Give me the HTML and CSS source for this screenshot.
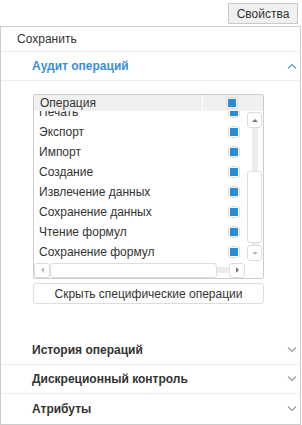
FILE: index.html
```html
<!DOCTYPE html>
<html lang="ru">
<head>
  <meta charset="UTF-8" />
  <title>Свойства</title>
  <link rel="stylesheet" href="styles.css">
</head>
<body>
  <div class="toolbar">
    <button class="tool-btn">Свойства</button>
  </div>
  <div class="panel">
    <div class="item">Сохранить</div>

    <div class="sect-head open">
      <span>Аудит операций</span>
      <svg class="chev" width="10" height="6" viewBox="0 0 10 6"><path d="M1 5.5L5 1.5L9 5.5" fill="none" stroke="#4b9be0" stroke-width="1.2"/></svg>
    </div>
    <div class="sect-body">
      <div class="grid">
        <div class="grid-head">
          <div class="col-name">Операция</div>
          <div class="col-check"><span class="check"></span></div>
        </div>
        <div class="grid-body">
          <div class="rows">
            <div class="row-list">
              <div class="row"><span>Печать</span><span class="check"></span></div>
              <div class="row"><span>Экспорт</span><span class="check"></span></div>
              <div class="row"><span>Импорт</span><span class="check"></span></div>
              <div class="row"><span>Создание</span><span class="check"></span></div>
              <div class="row"><span>Извлечение данных</span><span class="check"></span></div>
              <div class="row"><span>Сохранение данных</span><span class="check"></span></div>
              <div class="row"><span>Чтение формул</span><span class="check"></span></div>
              <div class="row"><span>Сохранение формул</span><span class="check"></span></div>
            </div>
          </div>
          <div class="vscroll">
            <div class="sb-btn"><span class="arr up"></span></div>
            <div class="v-track"></div>
            <div class="v-thumb"></div>
            <div class="v-track short"></div>
            <div class="sb-btn"><span class="arr down"></span></div>
          </div>
        </div>
        <div class="hscroll">
          <div class="sb-btn h"><span class="arr left"></span></div>
          <div class="h-thumb"></div>
          <div class="h-track"></div>
          <div class="sb-btn h"><span class="arr right"></span></div>
        </div>
      </div>
      <button class="wide-btn">Скрыть специфические операции</button>
    </div>

    <div class="sect-head">
      <span>История операций</span>
      <svg class="chev" width="10" height="6" viewBox="0 0 10 6"><path d="M1 0.5L5 4.5L9 0.5" fill="none" stroke="#999" stroke-width="1.1"/></svg>
    </div>
    <div class="sect-head">
      <span>Дискреционный контроль</span>
      <svg class="chev" width="10" height="6" viewBox="0 0 10 6"><path d="M1 0.5L5 4.5L9 0.5" fill="none" stroke="#999" stroke-width="1.1"/></svg>
    </div>
    <div class="sect-head last">
      <span>Атрибуты</span>
      <svg class="chev" width="10" height="6" viewBox="0 0 10 6"><path d="M1 0.5L5 4.5L9 0.5" fill="none" stroke="#999" stroke-width="1.1"/></svg>
    </div>
  </div>
</body>
</html>
```

FILE: styles.css
```css
* {
  box-sizing: border-box;
  margin: 0;
  padding: 0;
}
body {
  font-family: 'Liberation Sans', Arial, sans-serif;
  font-size: 12px;
  color: #333;
  background: #fff;
  width: 302px;
  height: 425px;
  overflow: hidden;
}
.toolbar {
  height: 26px;
  display: flex;
  justify-content: flex-end;
  align-items: flex-start;
  padding: 3px 4px 0 0;
}
.tool-btn {
  width: 70px;
  height: 21px;
  background: #f0f0f0;
  border: 1px solid #c9c9c9;
  font: inherit;
  color: #333;
}
.panel {
  width: 301px;
  height: 399px;
  border: 1px solid #ccc;
  display: flex;
  flex-direction: column;
}
.item {
  height: 25px;
  line-height: 24px;
  padding-left: 16px;
  border-bottom: 1px solid #eee;
}
.sect-head {
  height: 29px;
  flex-shrink: 0;
  display: flex;
  align-items: center;
  justify-content: space-between;
  padding: 0 3px 0 31px;
  border-bottom: 1px solid #eee;
  font-weight: bold;
}
.sect-head.open {
  color: #3a8fd8;
}
.sect-head.last {
  flex: 1;
  border-bottom: none;
}
.chev {
  display: block;
}
.sect-body {
  padding: 13px 36px 32px 32px;
  display: flex;
  flex-direction: column;
  gap: 4px;
}
.grid {
  height: 185px;
  border: 1px solid #ccc;
  border-radius: 2px;
  display: flex;
  flex-direction: column;
}
.grid-head {
  height: 16px;
  background: #f0f0f0;
  display: flex;
  align-items: center;
}
.col-name {
  width: 169px;
  height: 100%;
  line-height: 16px;
  padding-left: 6px;
  border-right: 1px solid #fff;
}
.col-check {
  flex: 1;
  display: flex;
  padding-left: 23px;
}
.grid-body {
  height: 151px;
  display: flex;
}
.rows {
  flex: 1;
  overflow: hidden;
}
.row-list {
  margin-top: -9px;
}
.row {
  height: 20px;
  display: flex;
  align-items: center;
  justify-content: space-between;
  padding: 0 6px 0 5px;
}
.check {
  width: 12px;
  height: 12px;
  border: 1px solid #dcdcdc;
  border-radius: 3px;
  padding: 1px;
  background: #fff;
  display: block;
}
.check::after {
  content: "";
  display: block;
  width: 8px;
  height: 8px;
  background: #2b8cd6;
}
.vscroll {
  width: 17px;
  padding: 1px 1px 1px 1px;
  display: flex;
  flex-direction: column;
  align-items: center;
}
.sb-btn {
  width: 15px;
  height: 16px;
  border: 1px solid #ddd;
  border-radius: 3px;
  background: #fff;
  display: flex;
  align-items: center;
  justify-content: center;
  flex-shrink: 0;
}
.v-track {
  flex: 1;
  width: 6px;
  background: #ececec;
}
.v-track.short {
  flex: 0 0 2px;
}
.v-thumb {
  width: 15px;
  height: 72px;
  border: 1px solid #ddd;
  border-radius: 3px;
  background: #fff;
}
.hscroll {
  height: 16px;
  display: flex;
  align-items: center;
}
.sb-btn.h {
  width: 16px;
  height: 15px;
}
.h-thumb {
  width: 167px;
  height: 15px;
  border: 1px solid #ddd;
  border-radius: 3px;
  background: #fff;
}
.h-track {
  width: 12px;
  height: 6px;
  background: #ececec;
}
.arr {
  width: 0;
  height: 0;
  border: 3px solid transparent;
}
.arr.up {
  border-bottom: 3px solid #777;
  border-top-width: 0;
}
.arr.down {
  border-top: 3px solid #bbb;
  border-bottom-width: 0;
}
.arr.left {
  border-right: 3px solid #bbb;
  border-left-width: 0;
}
.arr.right {
  border-left: 3px solid #777;
  border-right-width: 0;
}
.wide-btn {
  height: 21px;
  width: 231px;
  border: 1px solid #ddd;
  border-radius: 3px;
  background: #fff;
  font: inherit;
  color: #333;
}
```
